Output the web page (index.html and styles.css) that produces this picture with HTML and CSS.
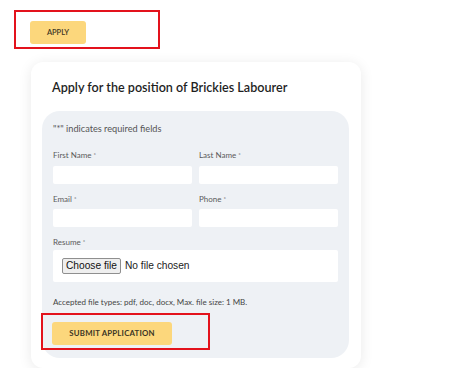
FILE: index.html
```html
<!DOCTYPE html>
<html lang="en">

<head>
    <meta charset="UTF-8">
    <meta name="viewport" content="width=device-width, initial-scale=1.0">
    <title>Apply - Brickies Labourer</title>
    <link rel="stylesheet" href="styles.css">
</head>

<body>
    <div class="highlight apply-highlight">
        <button class="gold-button apply-button">APPLY</button>
    </div>

    <div class="apply-card">
        <h2 class="card-title">Apply for the position of Brickies Labourer</h2>

        <form class="apply-form">
            <p class="required-note">"*" indicates required fields</p>

            <div class="field-row">
                <div class="field">
                    <label for="first-name">First Name <span class="req">*</span></label>
                    <input type="text" id="first-name" class="text-input">
                </div>
                <div class="field">
                    <label for="last-name">Last Name <span class="req">*</span></label>
                    <input type="text" id="last-name" class="text-input">
                </div>
            </div>

            <div class="field-row">
                <div class="field">
                    <label for="email">Email <span class="req">*</span></label>
                    <input type="email" id="email" class="text-input">
                </div>
                <div class="field">
                    <label for="phone">Phone <span class="req">*</span></label>
                    <input type="tel" id="phone" class="text-input">
                </div>
            </div>

            <div class="field">
                <label for="resume">Resume <span class="req">*</span></label>
                <div class="file-box">
                    <input type="file" id="resume" class="file-input">
                    <label for="resume" class="file-button">Choose file</label>
                    <span class="file-name">No file chosen</span>
                </div>
            </div>

            <p class="file-note">Accepted file types: pdf, doc, docx, Max. file size: 1 MB.</p>

            <div class="highlight submit-highlight">
                <button type="button" class="gold-button submit-button">SUBMIT APPLICATION</button>
            </div>
        </form>
    </div>
</body>

</html>
```

FILE: styles.css
```css
body {
    margin: 0;
    font-family: Lato, "Open Sans", sans-serif;
    color: #222;
    background: #fff;
}

/* red annotation boxes */
.highlight {
    border: 2px solid #e3121c;
    box-sizing: border-box;
}

.apply-highlight {
    width: 146px;
    height: 39px;
    margin: 10px 0 0 14px;
    padding: 7px 0 0 14px;
}

.gold-button {
    background: #fcd77c;
    color: #3b3524;
    border: none;
    border-radius: 3px;
    font-family: Lato, sans-serif;
    cursor: pointer;
}

.apply-button {
    width: 56px;
    height: 23px;
    padding: 0;
    font-size: 7.5px;
    font-weight: 600;
}

.apply-card {
    width: 330px;
    box-sizing: border-box;
    margin: 13px 0 0 31px;
    padding: 18px 12px 10px 11px;
    background: #fff;
    border-radius: 12px;
    box-shadow: 0 2px 14px rgba(0, 0, 0, 0.09);
}

.card-title {
    margin: 0 0 15px 10px;
    font-size: 12.6px;
    font-weight: 600;
    line-height: 16px;
    color: #1f1f1f;
}

.apply-form {
    background: #eef1f5;
    border-radius: 18px;
    padding: 12px 11px 8px 11px;
}

.required-note {
    margin: 0 0 14px;
    font-size: 9.2px;
    line-height: 12px;
    color: #555;
}

.field-row {
    display: flex;
    gap: 7px;
}

.field {
    flex: 1;
    margin-bottom: 9px;
}

.field label {
    display: block;
    font-size: 8px;
    line-height: 12px;
    color: #5a5a5a;
    margin-bottom: 2px;
}

.req {
    font-size: 6px;
    vertical-align: top;
}

.text-input {
    width: 100%;
    height: 18px;
    box-sizing: border-box;
    border: none;
    border-radius: 2px;
    background: #fff;
}

.file-box {
    display: flex;
    align-items: center;
    gap: 4px;
    height: 32px;
    box-sizing: border-box;
    background: #fff;
    border-radius: 2px;
    padding: 0 0 0 9px;
    font-family: "Liberation Sans", Arial, sans-serif;
    font-size: 10.2px;
    color: #222;
}

.file-input {
    display: none;
}

.field .file-button {
    display: block;
    height: 16px;
    box-sizing: border-box;
    margin: 0;
    padding: 0 3px;
    background: #efefef;
    border: 1px solid #8f8f8f;
    border-radius: 2px;
    font-family: "Liberation Sans", Arial, sans-serif;
    font-size: 10.2px;
    line-height: 14px;
    color: #111;
    cursor: pointer;
}

.file-name {
    line-height: 14px;
}

.file-note {
    margin: 14px 0 5px;
    font-size: 8px;
    line-height: 12px;
    color: #444;
}

.submit-highlight {
    width: 169px;
    height: 37px;
    margin-left: -12px;
    padding: 5px 0 0 9px;
}

.submit-button {
    width: 120px;
    height: 23px;
    padding: 0;
    font-size: 7.8px;
    font-weight: 700;
    letter-spacing: 0.2px;
}
```
